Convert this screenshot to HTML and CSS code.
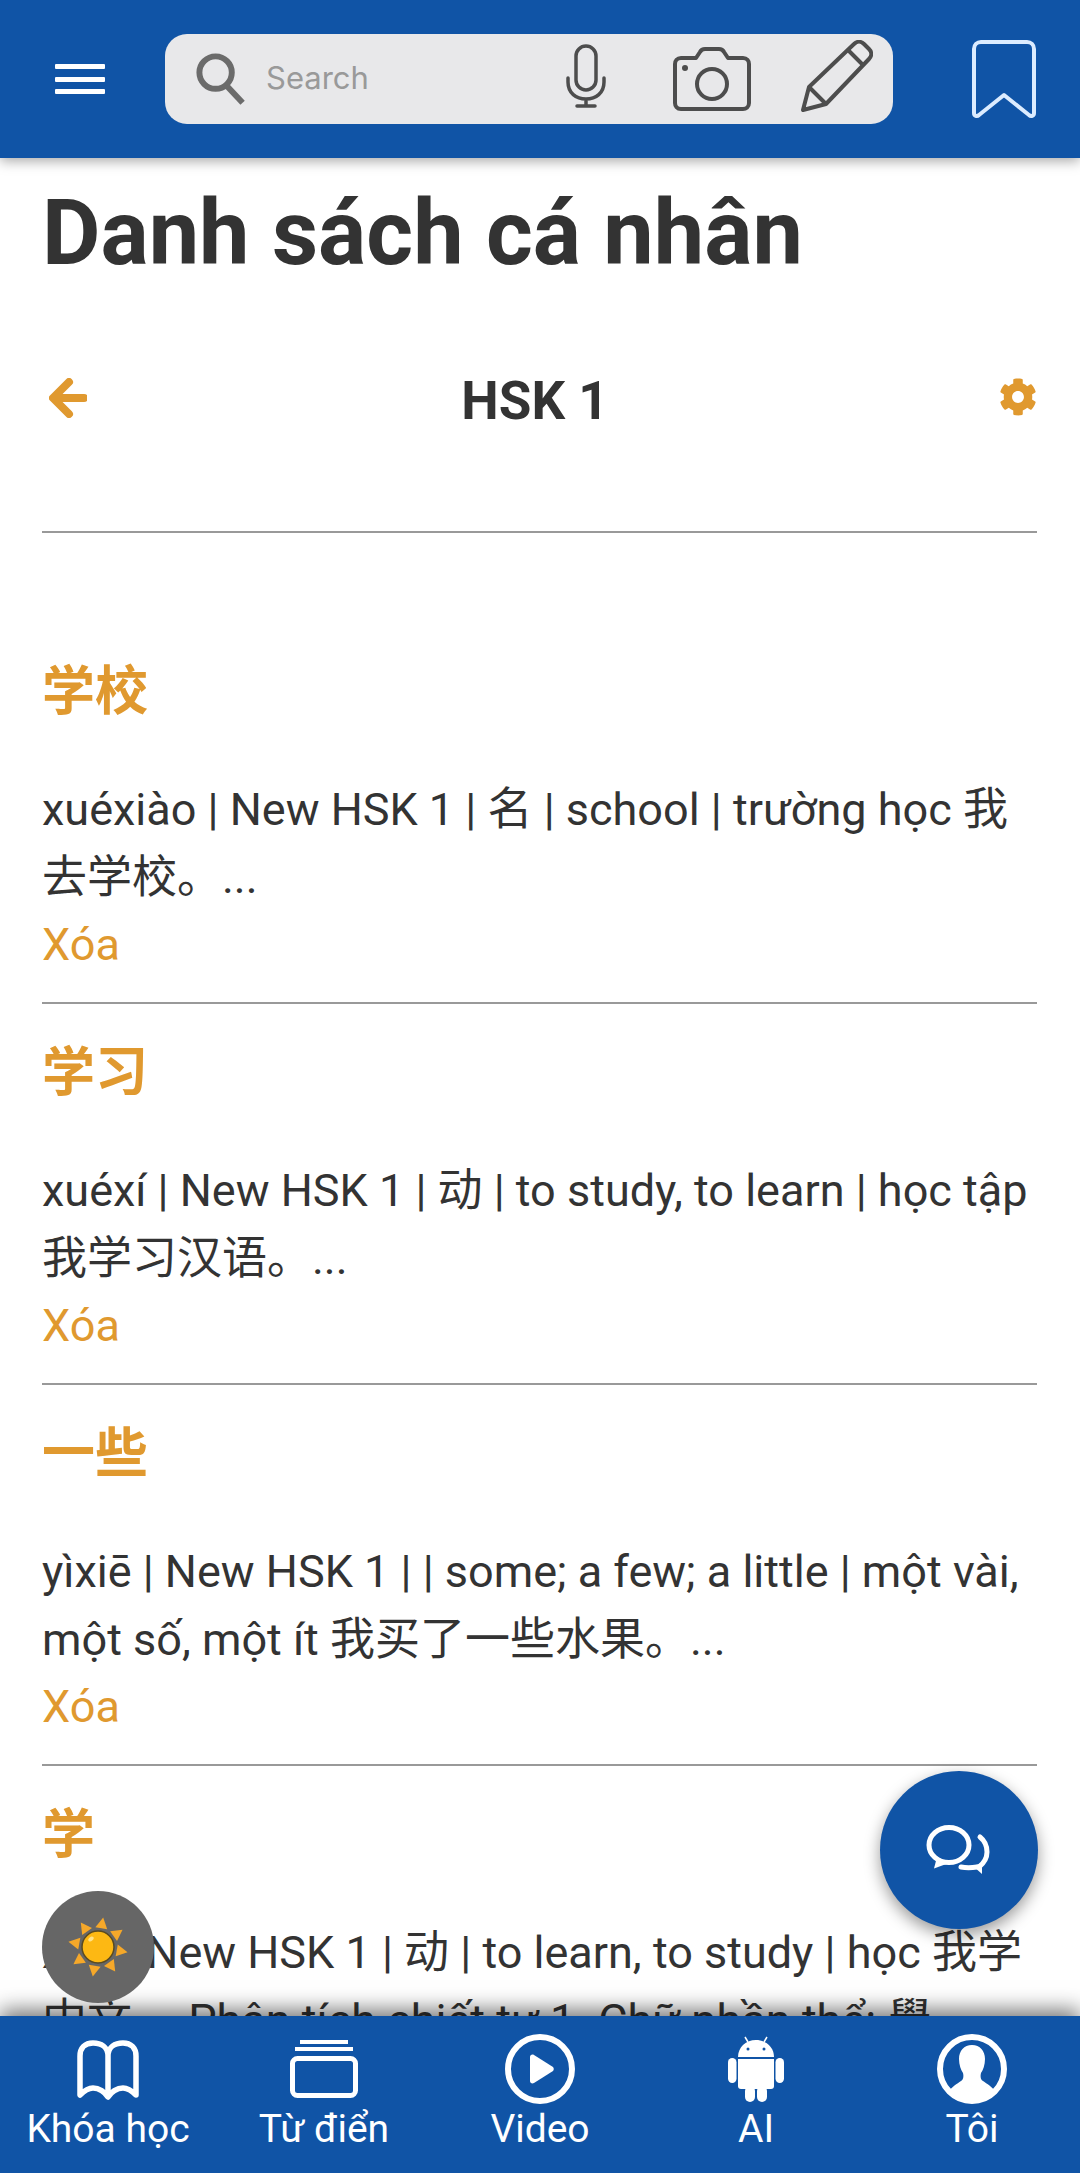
FILE: index.html
```html
<!DOCTYPE html>
<html lang="vi">
<head>
  <meta charset="UTF-8" />
  <meta name="viewport" content="width=device-width, initial-scale=1.0"/>
  <title>Danh sách cá nhân</title>
  <link rel="stylesheet" href="styles.css">
</head>
<body>
  <header class="topbar">
    <div class="menu-btn"><span></span><span></span><span></span></div>
    <div class="search">
      <svg class="ic-search" viewBox="0 0 50 50"><circle cx="20" cy="20" r="15" fill="none" stroke="#6b6b6b" stroke-width="5.5"/><path d="M30 32l15 16" stroke="#6b6b6b" stroke-width="5.5" fill="none"/></svg>
      <span class="search-text">Search</span>
      <svg class="ic-mic" viewBox="0 0 40 64" fill="none" stroke="#4d4d4d" stroke-width="3.5" stroke-linecap="round"><rect x="10" y="2" width="20" height="44" rx="10"/><path d="M2 34v4c0 11 8 17 18 17s18-6 18-17v-4M20 55v7M11 62h18"/></svg>
      <svg class="ic-camera" viewBox="0 0 78 64" fill="none" stroke="#4d4d4d" stroke-width="4" stroke-linejoin="round"><path d="M8 11h15l4-6c1-2 3-3 5-3h14c2 0 4 1 5 3l4 6h15c4 0 6 3 6 6v39c0 4-3 6-6 6H8c-4 0-6-3-6-6V17c0-3 2-6 6-6z"/><circle cx="39" cy="37" r="15"/><circle cx="12" cy="21" r="3" fill="#4d4d4d" stroke="none"/></svg>
      <svg class="ic-pencil" viewBox="0 0 72 72" fill="none" stroke="#4d4d4d" stroke-width="4" stroke-linejoin="round"><path d="M2 70l6-23L53 4c3-3 7-3 10 0l5 5c3 3 3 7 0 10L25 64z"/><path d="M8 47l17 17M47 10l15 15"/></svg>
    </div>
    <svg class="ic-bookmark" viewBox="0 0 66 80" fill="none" stroke="#dcecff" stroke-width="4" stroke-linejoin="round"><path d="M10 3h46c4 0 7 3 7 7v64c0 3-3 4-5 2L33 56 8 76c-2 2-5 1-5-2V10c0-4 3-7 7-7z"/></svg>
  </header>

  <main class="content">
    <h1 class="page-title">Danh sách cá nhân</h1>
    <div class="list-head">
      <svg class="ic-back" viewBox="0 0 38 40"><path d="M20 4L4 20l16 16M6 20h29" fill="none" stroke="#e0992f" stroke-width="8" stroke-linecap="round" stroke-linejoin="round"/></svg>
      <h2 class="list-name">HSK 1</h2>
      <svg class="ic-gear" viewBox="0 0 512 512"><path fill="#e0992f" d="M487.4 315.7l-42.6-24.6c4.3-23.2 4.3-47 0-70.2l42.6-24.6c4.9-2.8 7.1-8.6 5.5-14-11.1-35.6-30-67.8-54.7-94.6-3.8-4.1-10-5.1-14.8-2.3L380.8 110c-17.9-15.4-38.5-27.3-60.8-35.1V25.8c0-5.6-3.9-10.5-9.4-11.7-36.7-8.2-74.3-7.8-109.2 0-5.5 1.2-9.4 6.1-9.4 11.7V75c-22.2 7.9-42.8 19.8-60.8 35.1L88.7 85.5c-4.9-2.8-11-1.9-14.8 2.3-24.7 26.7-43.6 58.9-54.7 94.6-1.7 5.4.6 11.2 5.5 14L67.3 221c-4.3 23.2-4.3 47 0 70.2l-42.6 24.6c-4.9 2.8-7.1 8.6-5.5 14 11.1 35.6 30 67.8 54.7 94.6 3.8 4.1 10 5.1 14.8 2.3l42.6-24.6c17.9 15.4 38.5 27.3 60.8 35.1v49.2c0 5.6 3.9 10.5 9.4 11.7 36.7 8.2 74.3 7.8 109.2 0 5.5-1.2 9.4-6.1 9.4-11.7v-49.2c22.2-7.9 42.8-19.8 60.8-35.1l42.6 24.6c4.9 2.8 11 1.9 14.8-2.3 24.7-26.7 43.6-58.9 54.7-94.6 1.5-5.5-.7-11.3-5.6-14.1zM256 336c-44.1 0-80-35.9-80-80s35.9-80 80-80 80 35.9 80 80-35.9 80-80 80z"/></svg>
    </div>
    <hr class="rule first-rule">

    <article class="word">
      <h3 class="word-title">学校</h3>
      <p class="word-text">xuéxiào | New HSK 1 | 名 | school | trường học 我去学校。...</p>
      <a class="word-del">Xóa</a>
    </article>
    <hr class="rule">
    <article class="word">
      <h3 class="word-title">学习</h3>
      <p class="word-text">xuéxí | New HSK 1 | 动 | to study, to learn | học tập 我学习汉语。...</p>
      <a class="word-del">Xóa</a>
    </article>
    <hr class="rule">
    <article class="word">
      <h3 class="word-title">一些</h3>
      <p class="word-text">yìxiē | New HSK 1 | | some; a few; a little | một vài, một số, một ít 我买了一些水果。...</p>
      <a class="word-del">Xóa</a>
    </article>
    <hr class="rule">
    <article class="word">
      <h3 class="word-title">学</h3>
      <p class="word-text">xué | New HSK 1 | 动 | to learn, to study | học 我学中文。 Phân tích chiết tự 1. Chữ phần thể: 學</p>
    </article>
  </main>

  <div class="sun-btn">
    <svg viewBox="-32 -32 64 64">
      <g fill="#f5a82a">
        <path d="M0 -30l6 11h-12z" transform="rotate(10)"/>
        <path d="M0 -30l6 11h-12z" transform="rotate(55)"/>
        <path d="M0 -30l6 11h-12z" transform="rotate(100)"/>
        <path d="M0 -30l6 11h-12z" transform="rotate(145)"/>
        <path d="M0 -30l6 11h-12z" transform="rotate(190)"/>
        <path d="M0 -30l6 11h-12z" transform="rotate(235)"/>
        <path d="M0 -30l6 11h-12z" transform="rotate(280)"/>
        <path d="M0 -30l6 11h-12z" transform="rotate(325)"/>
      </g>
      <circle r="16" fill="#fdb813" stroke="#5a4a20" stroke-width="1.5"/>
      <ellipse cx="-7" cy="-8" rx="3" ry="2" fill="#ffe28a" transform="rotate(-40 -7 -8)"/>
    </svg>
  </div>
  <div class="chat-btn">
    <svg viewBox="0 0 120 120" fill="none" stroke="#fff" stroke-width="5" stroke-linecap="round">
      <ellipse cx="50" cy="55" rx="20" ry="17.500"/>
      <path d="M38 67L35 78.500L50 73z" fill="#fff" stroke="none"/>
      <path d="M81 47c5 4 7 10 7 15 0 6-3 11-8 15"/>
      <path d="M62 77c5 1 10 1 16 0"/>
      <path d="M74 76l9-3 0 11z" fill="#fff" stroke="none"/>
    </svg>
  </div>

  <nav class="tabbar">
    <div class="tab">
      <svg viewBox="0 0 70 70" fill="none" stroke="#fff" stroke-width="5.5" stroke-linejoin="round"><g transform="translate(3 6)"><path d="M4 55V16C4 8 9 3 17 3c8 0 15 4 15 13 0-9 7-13 15-13 8 0 13 5 13 13v39c-4-4-8-7-13-7-6 0-12 4-15 9-3-5-9-9-15-9-5 0-9 3-13 7zM32 16v40"/></g></svg>
      <span>Khóa học</span>
    </div>
    <div class="tab">
      <svg viewBox="0 0 70 70" fill="none" stroke="#fff"><g transform="translate(0 6)"><path d="M11 2h48M6 9h58" stroke-width="4"/><rect x="3.500" y="18.500" width="63" height="37" rx="5" stroke-width="5"/></g></svg>
      <span>Từ điển</span>
    </div>
    <div class="tab">
      <svg viewBox="0 0 70 70"><circle cx="35" cy="35" r="32" fill="none" stroke="#fff" stroke-width="6"/><path d="M25 23c0-2 2-3 4-2l19 12c1 1 1 3 0 4L29 49c-2 1-4 0-4-2z" fill="#fff"/></svg>
      <span>Video</span>
    </div>
    <div class="tab">
      <svg viewBox="0 0 70 70" fill="#fff"><g transform="translate(7 2)"><path d="M10 21C10 11 18 4 28 4s18 7 18 17z"/><path d="M17 1l3 5M39 1l-3 5" stroke="#fff" stroke-width="1.500"/><path d="M10 23h36v27c0 2-1 3-3 3H13c-2 0-3-1-3-3z"/><rect x="0" y="22" width="8.500" height="25" rx="4.200"/><rect x="47.500" y="22" width="8.500" height="25" rx="4.200"/><rect x="17" y="50" width="10" height="16" rx="5"/><rect x="29" y="50" width="10" height="16" rx="5"/><circle cx="20" cy="13" r="1.500" fill="#1054a6"/><circle cx="36" cy="13" r="1.500" fill="#1054a6"/></g></svg>
      <span>AI</span>
    </div>
    <div class="tab">
      <svg viewBox="0 0 70 70"><circle cx="35" cy="35" r="32" fill="none" stroke="#fff" stroke-width="6"/><path d="M35 11c-8 0-13 6-13 14 0 6 2 11 4 14 1 4 0 7-2 8-4 3-9 5-13 12 5 6 13 9 24 9s19-3 24-9c-4-7-9-9-13-12-2-1-3-4-2-8 2-3 4-8 4-14 0-8-5-14-13-14z" fill="#fff"/></svg>
      <span>Tôi</span>
    </div>
  </nav>
</body>
</html>
```

FILE: styles.css
```css
* {
  box-sizing: border-box;
}
html, body {
  margin: 0;
  height: 2173px;
  overflow: hidden;
}
body {
  position: relative;
  display: flex;
  flex-direction: column;
  background-color: #fff;
  color: #333;
  font-family: Roboto, "Noto Sans CJK SC", sans-serif;
}

/* top bar */
.topbar {
  flex: none;
  height: 158px;
  display: flex;
  align-items: flex-start;
  background-color: #1054a6;
  box-shadow: 0 3px 12px rgba(0, 0, 0, 0.35);
  position: relative;
  z-index: 2;
}
.menu-btn {
  width: 50px;
  margin: 64px 0 0 55px;
  display: flex;
  flex-direction: column;
  gap: 7.5px;
}
.menu-btn span {
  height: 5px;
  background-color: #fff;
  border-radius: 1px;
}
.search {
  width: 728px;
  height: 90px;
  margin: 34px 0 0 60px;
  display: flex;
  align-items: center;
  background-color: #e8e8ea;
  border-radius: 22px;
}
.ic-search {
  width: 54px;
  height: 54px;
  margin: 0 0 2px 29px;
}
.search-text {
  width: 105px;
  margin: 0 0 4px 18px;
  font-size: 31px;
  color: #999;
  font-family: Inter, Roboto, sans-serif;
}
.ic-mic {
  width: 40px;
  height: 64px;
  margin: 0 0 7px 195px;
}
.ic-camera {
  width: 78px;
  height: 64px;
  margin-left: 67px;
}
.ic-pencil {
  width: 72px;
  height: 72px;
  margin: 0 0 7px 50px;
}
.ic-bookmark {
  width: 66px;
  height: 80px;
  margin: 39px 0 0 78px;
}

/* main list */
.content {
  flex: 1;
  min-height: 0;
  overflow: hidden;
  padding: 0 43px 0 42px;
}
.page-title {
  margin: 23px 0 0;
  font-size: 90px;
  line-height: 105px;
  font-weight: 700;
}
.list-head {
  height: 60px;
  margin-top: 85px;
  display: flex;
  align-items: center;
  justify-content: space-between;
  padding: 0 0 0 7px;
}
.ic-back {
  width: 38px;
  height: 40px;
  margin-bottom: 7px;
}
.list-name {
  margin: 0;
  font-size: 53px;
  font-weight: 700;
  position: relative;
  left: -8px;
}
.ic-gear {
  width: 38px;
  height: 38px;
  margin-bottom: 9px;
}
.rule {
  margin: 0;
  border: 0;
  height: 2px;
  background-color: #999;
}
.first-rule {
  margin-top: 100px;
  margin-bottom: 90px;
}
.word {
  height: 379px;
  padding-top: 34px;
}
.word-title {
  margin: 0;
  font-size: 53px;
  line-height: 70px;
  font-weight: 700;
  color: #e0992f;
}
.word-text {
  margin: 49px 0 0;
  font-size: 45px;
  line-height: 68px;
}
.word-del {
  display: block;
  font-size: 45px;
  line-height: 66px;
  color: #e0992f;
}

/* floating buttons */
.sun-btn {
  position: absolute;
  left: 42px;
  top: 1891px;
  width: 112px;
  height: 112px;
  border-radius: 50%;
  background-color: #666;
  display: flex;
  align-items: center;
  justify-content: center;
  z-index: 3;
}
.sun-btn svg {
  width: 64px;
  height: 64px;
}
.chat-btn {
  position: absolute;
  left: 880px;
  top: 1771px;
  width: 158px;
  height: 158px;
  border-radius: 50%;
  background-color: #1054a6;
  box-shadow: 0 6px 16px rgba(0, 0, 0, 0.4);
  display: flex;
  align-items: center;
  justify-content: center;
  z-index: 3;
}
.chat-btn svg {
  width: 120px;
  height: 120px;
}

/* bottom tabs */
.tabbar {
  flex: none;
  height: 157px;
  display: grid;
  grid-template-columns: repeat(5, 1fr);
  background-color: #1054a6;
  box-shadow: 0 -6px 20px rgba(0, 0, 0, 0.55);
  position: relative;
  z-index: 2;
}
.tab {
  display: flex;
  flex-direction: column;
  align-items: center;
  color: #fff;
  font-size: 39px;
  line-height: 44px;
  padding-top: 18px;
}
.tab svg {
  height: 70px;
  width: 70px;
  margin-bottom: 3px;
}
```
